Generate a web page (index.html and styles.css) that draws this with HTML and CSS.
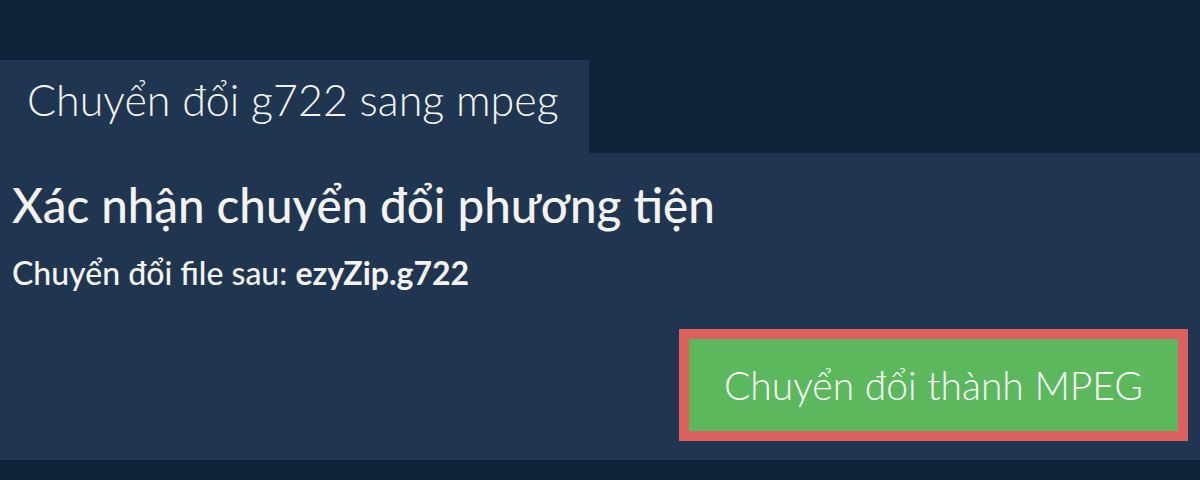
FILE: index.html
```html
<!DOCTYPE html>
<html>
<head>
    <meta charset="utf-8">
    <title>Chuyển đổi g722 sang mpeg</title>
    <link rel="stylesheet" href="styles.css">
</head>
<body>
<div class="page">
    <div class="tab">Chuyển đổi g722 sang mpeg</div>
    <section class="panel">
        <h1>Xác nhận chuyển đổi phương tiện</h1>
        <p class="file">Chuyển đổi file sau: <b>ezyZip.g722</b></p>
        <div class="actions">
            <button class="convert">Chuyển đổi thành MPEG</button>
        </div>
    </section>
</div>
</body>
</html>
```

FILE: styles.css
```css
html {
    background: #0f2339;
}

body {
    margin: 0;
    font-family: Lato, "Open Sans", sans-serif;
    color: #f3f3f3;
}

.page {
    padding-top: 60px;
}

.tab {
    display: inline-block;
    background: #203650;
    font-size: 43px;
    font-weight: 300;
    line-height: 50px;
    padding: 15px 30px 28px 27px;
}

.panel {
    background: #203650;
    padding: 24px 12px 19px 12px;
}

h1 {
    margin: 0;
    font-size: 47.5px;
    font-weight: 500;
    line-height: 56px;
}

.file {
    margin: 21px 0 0 0;
    font-size: 32px;
    font-weight: 500;
    line-height: 38px;
}

.file b {
    font-weight: 700;
}

.actions {
    display: flex;
    justify-content: flex-end;
    margin-top: 37px;
}

.convert {
    background: #5cb85c;
    color: #fff;
    border: 10px solid #dc605f;
    font-family: Lato, "Open Sans", sans-serif;
    font-size: 39px;
    font-weight: 300;
    height: 112px;
    width: 509px;
    padding: 0;
}
```
